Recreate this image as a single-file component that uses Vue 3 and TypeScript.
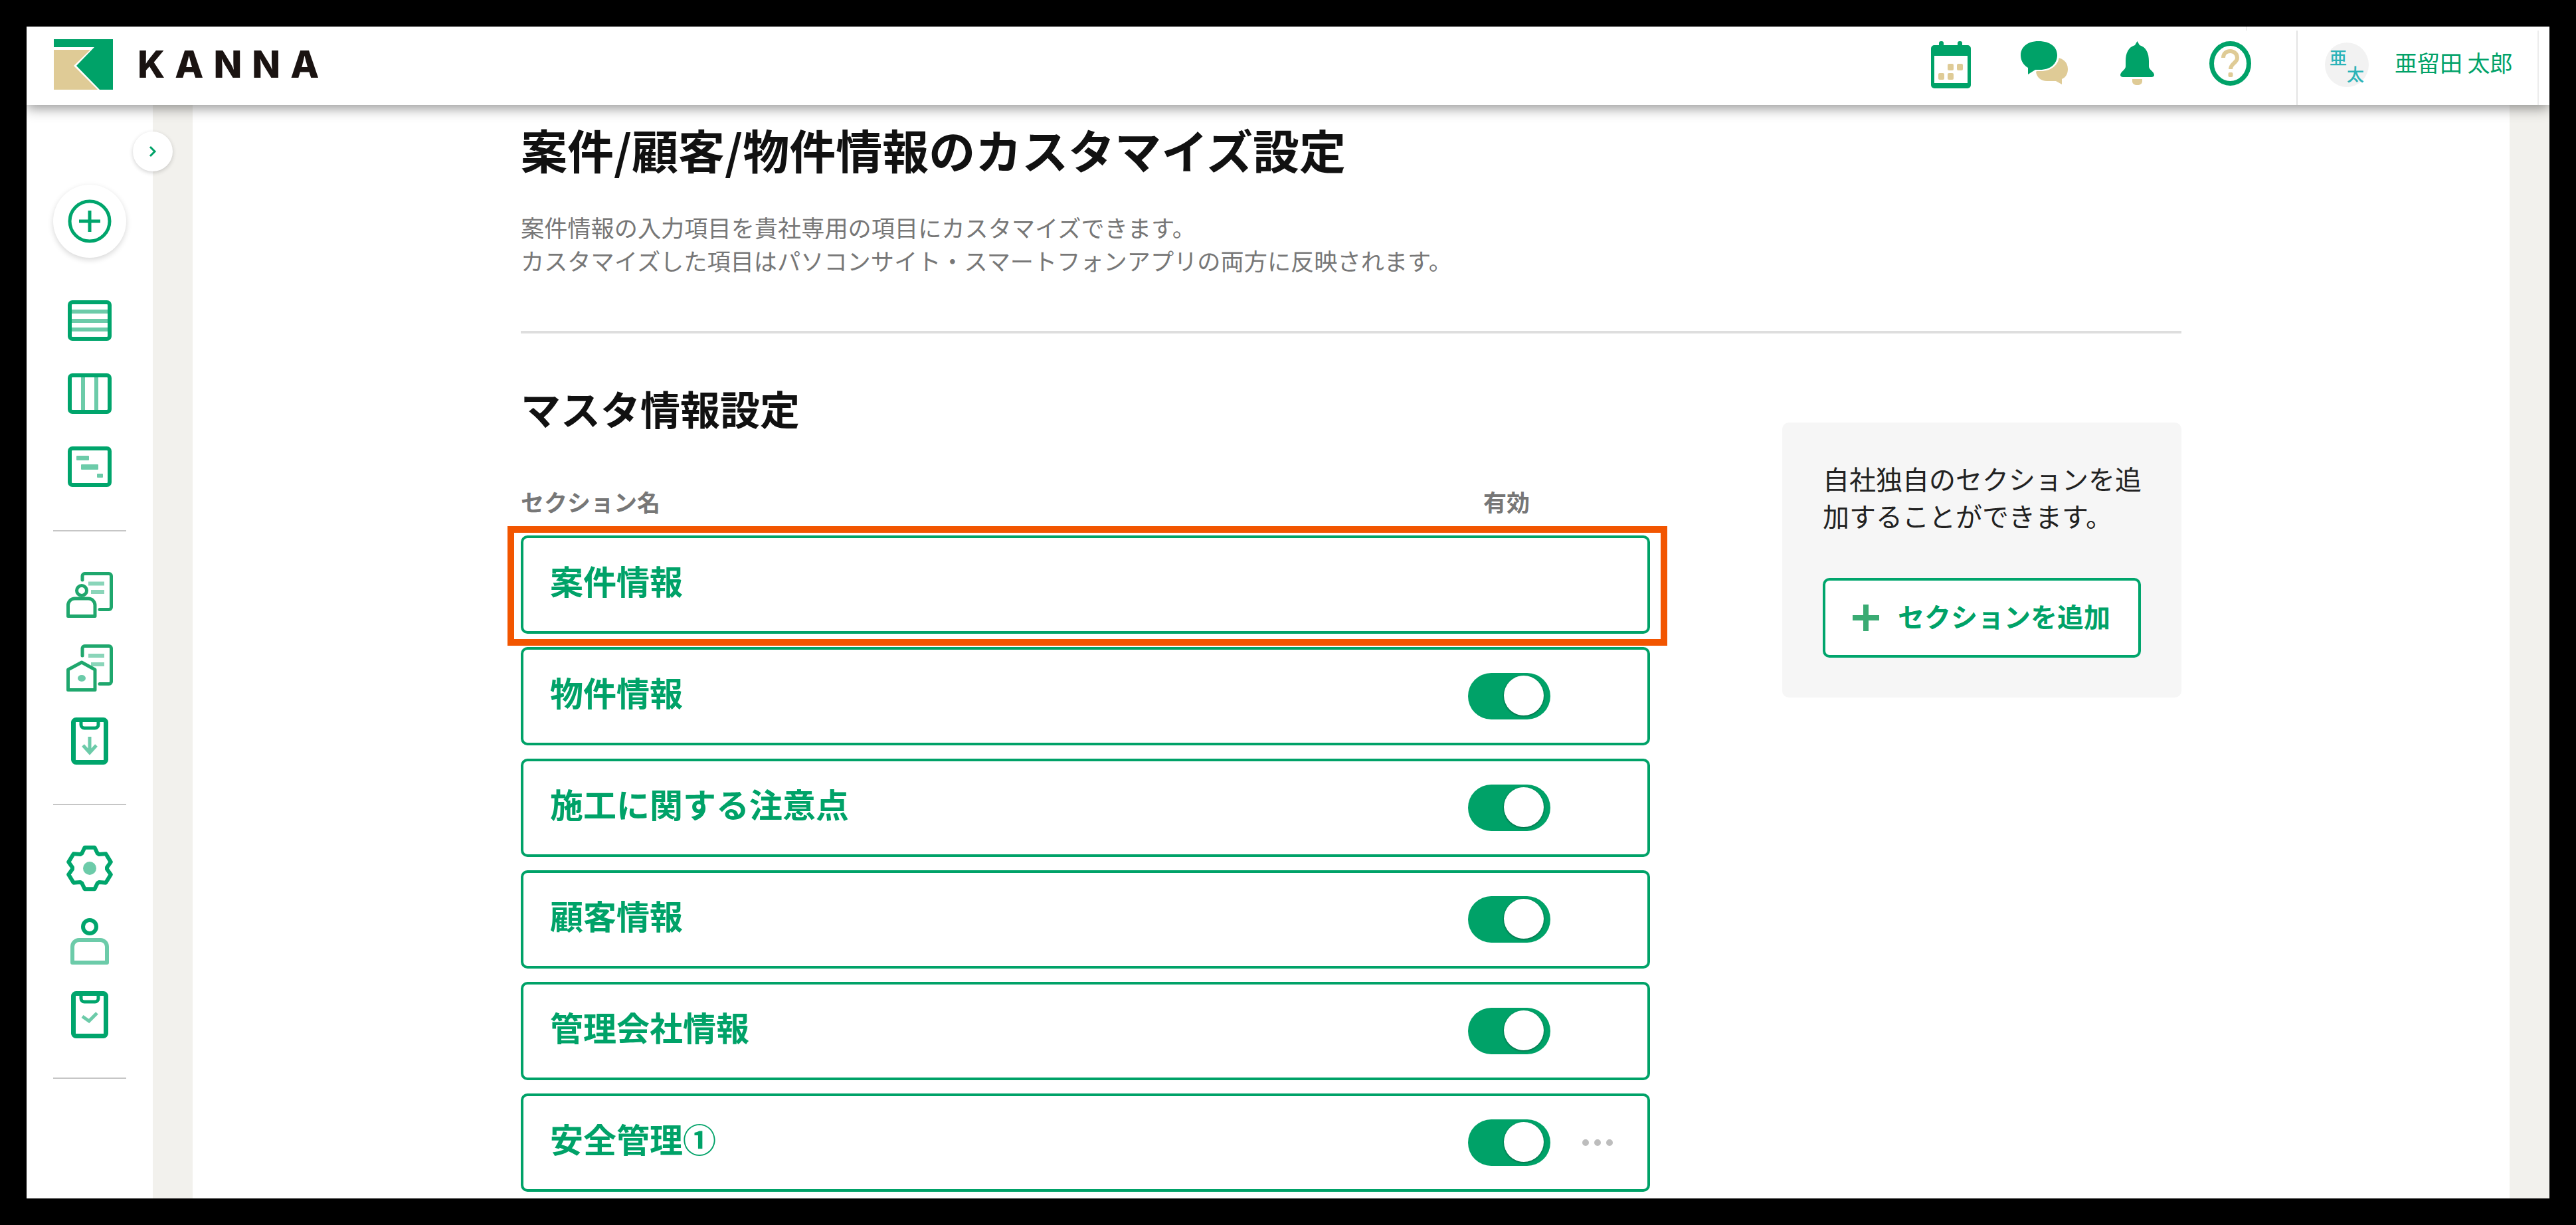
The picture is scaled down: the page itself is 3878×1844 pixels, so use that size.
<script setup lang="ts">
const rows = [
  { name: '案件情報', toggle: false, menu: false, highlight: true },
  { name: '物件情報', toggle: true, menu: false, highlight: false },
  { name: '施工に関する注意点', toggle: true, menu: false, highlight: false },
  { name: '顧客情報', toggle: true, menu: false, highlight: false },
  { name: '管理会社情報', toggle: true, menu: false, highlight: false },
  { name: '安全管理①', toggle: true, menu: true, highlight: false },
]

function gearPoints(cx: number, cy: number): string {
  const pts: string[] = []
  const outer = 32
  const inner = 25
  for (let i = 0; i < 6; i++) {
    const a = (-90 + i * 60) * (Math.PI / 180)
    const spans: [number, number][] = [
      [-27, inner],
      [-13, outer],
      [13, outer],
      [27, inner],
    ]
    for (const [d, r] of spans) {
      const t = a + (d * Math.PI) / 180
      const rx = r * 1.04
      pts.push(`${(cx + rx * Math.cos(t)).toFixed(1)},${(cy + r * Math.sin(t)).toFixed(1)}`)
    }
  }
  return pts.join(' ')
}
const gear = gearPoints(35, 35)
</script>

<template>
  <div class="frame">
    <header class="header">
      <span class="tick"></span>
      <div class="brand">
        <svg class="logo" width="89" height="76" viewBox="0 0 89 76">
          <rect width="89" height="76" fill="#00a268" />
          <polygon points="0,12 61,12 34,40 69,76 0,76" fill="#fff" />
          <polygon points="0,16 55,16 30,40 66,76 0,76" fill="#dfcb96" />
        </svg>
        <span class="wordmark">KANNA</span>
      </div>
      <div class="tools">
        <div class="tool">
          <svg width="60" height="71" viewBox="0 0 60 71">
            <rect y="6" width="60" height="65" rx="5" fill="#00a268" />
            <rect x="12" width="7" height="10" rx="3" fill="#00a268" />
            <rect x="40" width="7" height="10" rx="3" fill="#00a268" />
            <rect x="5" y="22" width="50" height="41" fill="#fff" />
            <rect x="25" y="34" width="9" height="10" rx="2" fill="#dfcb96" />
            <rect x="39" y="34" width="9" height="10" rx="2" fill="#dfcb96" />
            <rect x="11" y="48" width="9" height="10" rx="2" fill="#dfcb96" />
            <rect x="25" y="48" width="9" height="10" rx="2" fill="#dfcb96" />
          </svg>
        </div>
        <div class="tool">
          <svg width="71" height="66" viewBox="0 0 71 66">
            <path d="M48 24 C63 24 71 31 71 42 C71 50 67 55 62 57 L62 65 L53 60 L40 60 C30 60 24 54 23 46 Z" fill="#dfcb96" />
            <path d="M27 -1 C47 -1 58 8 58 21 C58 35 47 45 30 45 L24 45 L10 53 L10 42 C3 38 -2 31 -2 21 C-2 8 9 -1 27 -1 Z" fill="#fff" />
            <path d="M27 0 C45 0 55 9 55 21 C55 34 45 43 29 43 L22 43 L11 50 L11 40 C4 36 0 29 0 21 C0 9 10 0 27 0 Z" fill="#00a268" />
          </svg>
        </div>
        <div class="tool">
          <svg width="51" height="66" viewBox="0 0 51 66">
            <path d="M25.5 0 L29 6 C39 9 43 18 43 30 L43 38 C43 43 51 46 51 51 C51 53 49 54 47 54 L4 54 C2 54 0 53 0 51 C0 46 8 43 8 38 L8 30 C8 18 12 9 22 6 Z" fill="#00a268" />
            <path d="M18 57 H33 V60 C33 64 30 66 25.500 66 C21 66 18 64 18 60 Z" fill="#dfcb96" />
          </svg>
        </div>
        <div class="tool">
          <svg width="63" height="67" viewBox="0 0 63 67">
            <ellipse cx="31.500" cy="33.500" rx="28" ry="30" fill="none" stroke="#00a268" stroke-width="7" />
            <path d="M21 25 C21 18 26 15 31.500 15 C37 15 42 19 42 25 C42 33 32 33 32 42" fill="none" stroke="#dfcb96" stroke-width="6" />
            <rect x="28.500" y="47" width="7" height="7" rx="2" fill="#dfcb96" />
          </svg>
        </div>
      </div>
      <div class="user">
        <div class="avatar">
          <span class="avatar-a">亜</span>
          <span class="avatar-b">太</span>
        </div>
        <span class="user-name">亜留田 太郎</span>
      </div>
    </header>

    <div class="body">
      <aside class="sidebar">
        <button class="collapse" type="button" aria-label="開く">
          <svg width="14" height="18" viewBox="0 0 14 18">
            <polyline points="3,2 10,9 3,16" fill="none" stroke="#00a268" stroke-width="3" />
          </svg>
        </button>
        <button class="create" type="button" aria-label="追加">
          <svg width="66" height="66" viewBox="0 0 66 66">
            <circle cx="33" cy="33" r="30" fill="none" stroke="#00a56c" stroke-width="5" />
            <path d="M33 17 V49 M17 33 H49" fill="none" stroke="#00a56c" stroke-width="5" />
          </svg>
        </button>

        <nav class="nav first">
          <div class="nav-item">
            <svg width="66" height="61" viewBox="0 0 66 61">
              <path d="M6 17 H60 M6 31 H60 M6 44 H60" stroke="#6ccba9" stroke-width="6" />
              <rect x="3" y="3" width="60" height="55" rx="4" fill="none" stroke="#00a56c" stroke-width="6" />
            </svg>
          </div>
          <div class="nav-item">
            <svg width="66" height="61" viewBox="0 0 66 61">
              <path d="M23 6 V55 M43 6 V55" stroke="#6ccba9" stroke-width="6" />
              <rect x="3" y="3" width="60" height="55" rx="4" fill="none" stroke="#00a56c" stroke-width="6" />
            </svg>
          </div>
          <div class="nav-item">
            <svg width="66" height="61" viewBox="0 0 66 61">
              <rect x="3" y="3" width="60" height="55" rx="4" fill="none" stroke="#00a56c" stroke-width="6" />
              <rect x="13" y="14" width="19" height="7" rx="1" fill="#6ccba9" />
              <rect x="20" y="27" width="26" height="8" rx="1" fill="#6ccba9" />
              <rect x="44" y="41" width="9" height="6" rx="1" fill="#6ccba9" />
            </svg>
          </div>
        </nav>
        <hr class="rule first-rule" />
        <nav class="nav">
          <div class="nav-item">
            <svg width="70" height="69" viewBox="0 0 70 69">
              <path d="M24 12 V6 A3.500 3.500 0 0 1 27.500 2.500 H64 A3.500 3.500 0 0 1 67.500 6 V53 A3.500 3.500 0 0 1 64 56.500 H50" fill="none" stroke="#1fa76d" stroke-width="5" stroke-linecap="round" />
              <path d="M33 17.500 H57 M37 30 H57" stroke="#8ad5b9" stroke-width="6" />
              <circle cx="23" cy="28" r="7.500" fill="none" stroke="#1fa76d" stroke-width="5" />
              <path d="M2.500 66.500 V50 A10 10 0 0 1 12.500 40 H33 A10 10 0 0 1 43 50 V66.500 Z" fill="none" stroke="#1fa76d" stroke-width="5" stroke-linejoin="round" />
            </svg>
          </div>
          <div class="nav-item">
            <svg width="70" height="71" viewBox="0 0 70 71">
              <path d="M24 17 V6 A3.500 3.500 0 0 1 27.500 2.500 H64 A3.500 3.500 0 0 1 67.500 6 V56 A3.500 3.500 0 0 1 64 59.500 H50" fill="none" stroke="#1fa76d" stroke-width="5" stroke-linecap="round" />
              <path d="M33 17 H57 M37 30 H57" stroke="#8ad5b9" stroke-width="6" />
              <path d="M2.500 68.500 V38 L23 27 L43 38 V68.500 Z" fill="#fff" stroke="#1fa76d" stroke-width="5" stroke-linejoin="round" />
              <ellipse cx="23" cy="51" rx="6" ry="5" fill="#6ccba9" />
            </svg>
          </div>
          <div class="nav-item">
            <svg width="56" height="71" viewBox="0 0 56 71">
              <rect x="3.500" y="3.500" width="49" height="64" rx="4" fill="none" stroke="#00a56c" stroke-width="7" />
              <path d="M15 3 V11 A5 5 0 0 0 20 16 H36 A5 5 0 0 0 41 11 V3" fill="none" stroke="#00a56c" stroke-width="5" />
              <path d="M28 29 V53 M18 42 L28 53 L38 42" fill="none" stroke="#6ccba9" stroke-width="5" />
            </svg>
          </div>
        </nav>
        <hr class="rule" />
        <nav class="nav">
          <div class="nav-item">
            <svg width="70" height="70" viewBox="0 0 70 70">
              <polygon :points="gear" fill="none" stroke="#00a56c" stroke-width="6" stroke-linejoin="round" />
              <circle cx="35" cy="35" r="10" fill="#6ccba9" />
            </svg>
          </div>
          <div class="nav-item">
            <svg width="58" height="70" viewBox="0 0 58 70">
              <circle cx="29" cy="13" r="10" fill="none" stroke="#00a56c" stroke-width="6" />
              <path d="M3 67 V43 A10 10 0 0 1 13 33 H45 A10 10 0 0 1 55 43 V67 Z" fill="none" stroke="#6ccba9" stroke-width="6" stroke-linejoin="round" />
            </svg>
          </div>
          <div class="nav-item">
            <svg width="56" height="71" viewBox="0 0 56 71">
              <rect x="3.500" y="3.500" width="49" height="64" rx="4" fill="none" stroke="#00a56c" stroke-width="7" />
              <path d="M15 3 V11 A5 5 0 0 0 20 16 H36 A5 5 0 0 0 41 11 V3" fill="none" stroke="#00a56c" stroke-width="5" />
              <polyline points="17,38 27,45 39,33" fill="none" stroke="#6ccba9" stroke-width="5" />
            </svg>
          </div>
        </nav>
        <hr class="rule" />
      </aside>
      <div class="gutter"></div>

      <main class="main">
        <h1 class="title">案件/顧客/物件情報のカスタマイズ設定</h1>
        <p class="lead">案件情報の入力項目を貴社専用の項目にカスタマイズできます。<br />カスタマイズした項目はパソコンサイト・スマートフォンアプリの両方に反映されます。</p>
        <hr class="section-rule" />
        <div class="columns">
          <section class="master">
            <h2 class="subtitle">マスタ情報設定</h2>
            <div class="labels">
              <span>セクション名</span>
              <span class="label-active">有効</span>
            </div>
            <div class="list">
              <div v-for="row in rows" :key="row.name" class="row">
                <span class="row-name">{{ row.name }}</span>
                <div class="row-actions">
                  <div v-if="row.toggle" class="toggle"><span class="knob"></span></div>
                  <div v-if="row.menu" class="dots"><i></i><i></i><i></i></div>
                </div>
                <div v-if="row.highlight" class="callout"></div>
              </div>
            </div>
          </section>
          <aside class="panel">
            <p class="panel-text">自社独自のセクションを追加することができます。</p>
            <button class="add" type="button">
              <svg width="40" height="40" viewBox="0 0 40 40">
                <path d="M20 0 V40 M0 20 H40" stroke="#3aab73" stroke-width="8" />
              </svg>
              <span class="add-label">セクションを追加</span>
            </button>
          </aside>
        </div>
      </main>
      <div class="gutter"></div>
    </div>
  </div>
</template>

<style>
html,
body {
  margin: 0;
  background: #000;
}
</style>

<style scoped>
.frame {
  box-sizing: border-box;
  width: 3798px;
  height: 1764px;
  margin: 40px;
  display: flex;
  flex-direction: column;
  overflow: hidden;
  background: #fff;
  font-family: "Noto Sans CJK JP", "Noto Sans", sans-serif;
}
.header {
  position: relative;
  z-index: 2;
  flex: none;
  height: 118px;
  display: flex;
  align-items: center;
  background: #fff;
  box-shadow: 0 5px 18px rgba(0, 0, 0, 0.42);
}
.tick {
  position: absolute;
  top: 0;
  left: 3341px;
  width: 1px;
  height: 6px;
  background: #ddd;
}
.brand {
  display: flex;
  align-items: center;
  gap: 37px;
  padding-left: 41px;
  flex: 1;
}
.logo {
  display: block;
  margin-top: -4px;
}
.wordmark {
  font-family: Inter, "Liberation Sans", sans-serif;
  font-weight: 800;
  font-size: 56px;
  line-height: 56px;
  letter-spacing: 15px;
  color: #1a1311;
  margin-top: -4px;
}
.tools {
  display: flex;
  margin-right: 30px;
}
.tool {
  width: 140px;
  display: flex;
  justify-content: center;
  margin-top: -3px;
}
.tool svg {
  display: block;
}
.user {
  align-self: flex-end;
  box-sizing: border-box;
  width: 365px;
  height: 112px;
  margin-right: 16px;
  display: flex;
  align-items: flex-start;
  padding: 18px 0 0 41px;
  gap: 39px;
  border-left: 2px solid #e4e4e4;
  border-right: 2px solid #ececec;
}
.avatar {
  box-sizing: border-box;
  width: 66px;
  height: 67px;
  border-radius: 50%;
  background: #f2f2f2;
  display: flex;
  flex-direction: column;
  color: #2bb3b8;
  font-size: 26px;
  font-weight: 500;
  line-height: 25px;
  padding: 9px 7px 0;
}
.avatar-b {
  align-self: flex-end;
}
.user-name {
  font-size: 34px;
  line-height: 40px;
  margin-top: 10px;
  color: #00a268;
  white-space: nowrap;
}
.body {
  flex: 1;
  display: flex;
  min-height: 0;
}
.sidebar {
  position: relative;
  flex: none;
  width: 190px;
  padding-top: 120px;
  display: flex;
  flex-direction: column;
  align-items: center;
  background: #fff;
}
.gutter {
  flex: none;
  width: 60px;
  background: #f2f1ed;
}
.collapse {
  position: absolute;
  top: 40px;
  right: -30px;
  z-index: 1;
  width: 60px;
  height: 60px;
  padding: 0;
  border: 0;
  border-radius: 50%;
  background: #fff;
  box-shadow: 0 2px 6px rgba(0, 0, 0, 0.18);
  display: flex;
  align-items: center;
  justify-content: center;
}
.create {
  flex: none;
  width: 110px;
  height: 110px;
  padding: 0;
  border: 0;
  border-radius: 50%;
  background: #fff;
  box-shadow: 0 3px 9px rgba(0, 0, 0, 0.16);
  display: flex;
  align-items: center;
  justify-content: center;
}
.nav {
  display: flex;
  flex-direction: column;
  align-self: stretch;
}
.nav.first {
  margin-top: 39px;
}
.nav-item {
  height: 110px;
  display: flex;
  align-items: center;
  justify-content: center;
}
.nav-item svg {
  display: block;
}
.rule {
  flex: none;
  box-sizing: border-box;
  width: 110px;
  height: 2px;
  margin: 40px 0;
  border: 0;
  background: #c6c6c6;
}
.rule.first-rule {
  margin-top: 41px;
}
.main {
  flex: 1;
  min-width: 0;
  padding: 27px 494px 0 494px;
  background: #fff;
}
.title {
  margin: 0;
  font-size: 70px;
  line-height: 80px;
  font-weight: 700;
  color: #111;
  white-space: nowrap;
}
.lead {
  margin: 52px 0 0;
  font-size: 35.2px;
  line-height: 50px;
  color: #777;
  white-space: nowrap;
}
.section-rule {
  margin: 81px 0 0;
  height: 4px;
  border: 0;
  background: #dedede;
}
.columns {
  display: flex;
  justify-content: space-between;
  align-items: flex-start;
  margin-top: 72px;
}
.master {
  width: 1700px;
}
.subtitle {
  margin: 0;
  font-size: 60px;
  line-height: 80px;
  font-weight: 700;
  color: #111;
}
.labels {
  margin-top: 81px;
  display: flex;
  justify-content: space-between;
  padding-right: 181px;
  font-size: 35px;
  line-height: 40px;
  font-weight: 700;
  color: #777;
}
.list {
  margin-top: 31px;
  display: flex;
  flex-direction: column;
  gap: 20px;
}
.row {
  position: relative;
  box-sizing: border-box;
  height: 148px;
  display: flex;
  align-items: center;
  padding-left: 40px;
  border: 4px solid #00a268;
  border-radius: 10px;
  background: #fff;
}
.row-name {
  flex: 1;
  font-size: 50px;
  line-height: 60px;
  font-weight: 700;
  color: #00a268;
  margin-top: -14px;
}
.row-actions {
  flex: none;
  width: 270px;
  display: flex;
  align-items: center;
  gap: 48px;
}
.toggle {
  flex: none;
  box-sizing: border-box;
  width: 124px;
  height: 70px;
  padding: 4px 10px 0 0;
  border-radius: 35px;
  background: #00a268;
  display: flex;
  justify-content: flex-end;
  align-items: flex-start;
}
.knob {
  width: 60px;
  height: 60px;
  border-radius: 50%;
  background: #fff;
  box-shadow: 0 1px 3px rgba(0, 0, 0, 0.45);
}
.dots {
  display: flex;
  gap: 8px;
}
.dots i {
  display: block;
  width: 10px;
  height: 10px;
  border-radius: 50%;
  background: #bdbdbd;
}
.callout {
  position: absolute;
  top: -18px;
  left: -24px;
  right: -30px;
  bottom: -22px;
  border: 10px solid #f25500;
  pointer-events: none;
}
.panel {
  box-sizing: border-box;
  width: 601px;
  height: 414px;
  margin-top: 62px;
  padding: 56px 60px 0 61px;
  border-radius: 10px;
  background: #f6f6f6;
}
.panel-text {
  margin: 0;
  font-size: 40px;
  line-height: 56px;
  color: #222;
}
.add {
  box-sizing: border-box;
  width: 479px;
  height: 120px;
  margin-top: 66px;
  padding: 0 0 0 41px;
  display: flex;
  align-items: center;
  gap: 28px;
  border: 4px solid #00a56c;
  border-radius: 10px;
  background: #fff;
  font-family: inherit;
  font-size: 40px;
  font-weight: 700;
  color: #00a268;
  white-space: nowrap;
}
.add-label {
  margin-top: -6px;
}
</style>
